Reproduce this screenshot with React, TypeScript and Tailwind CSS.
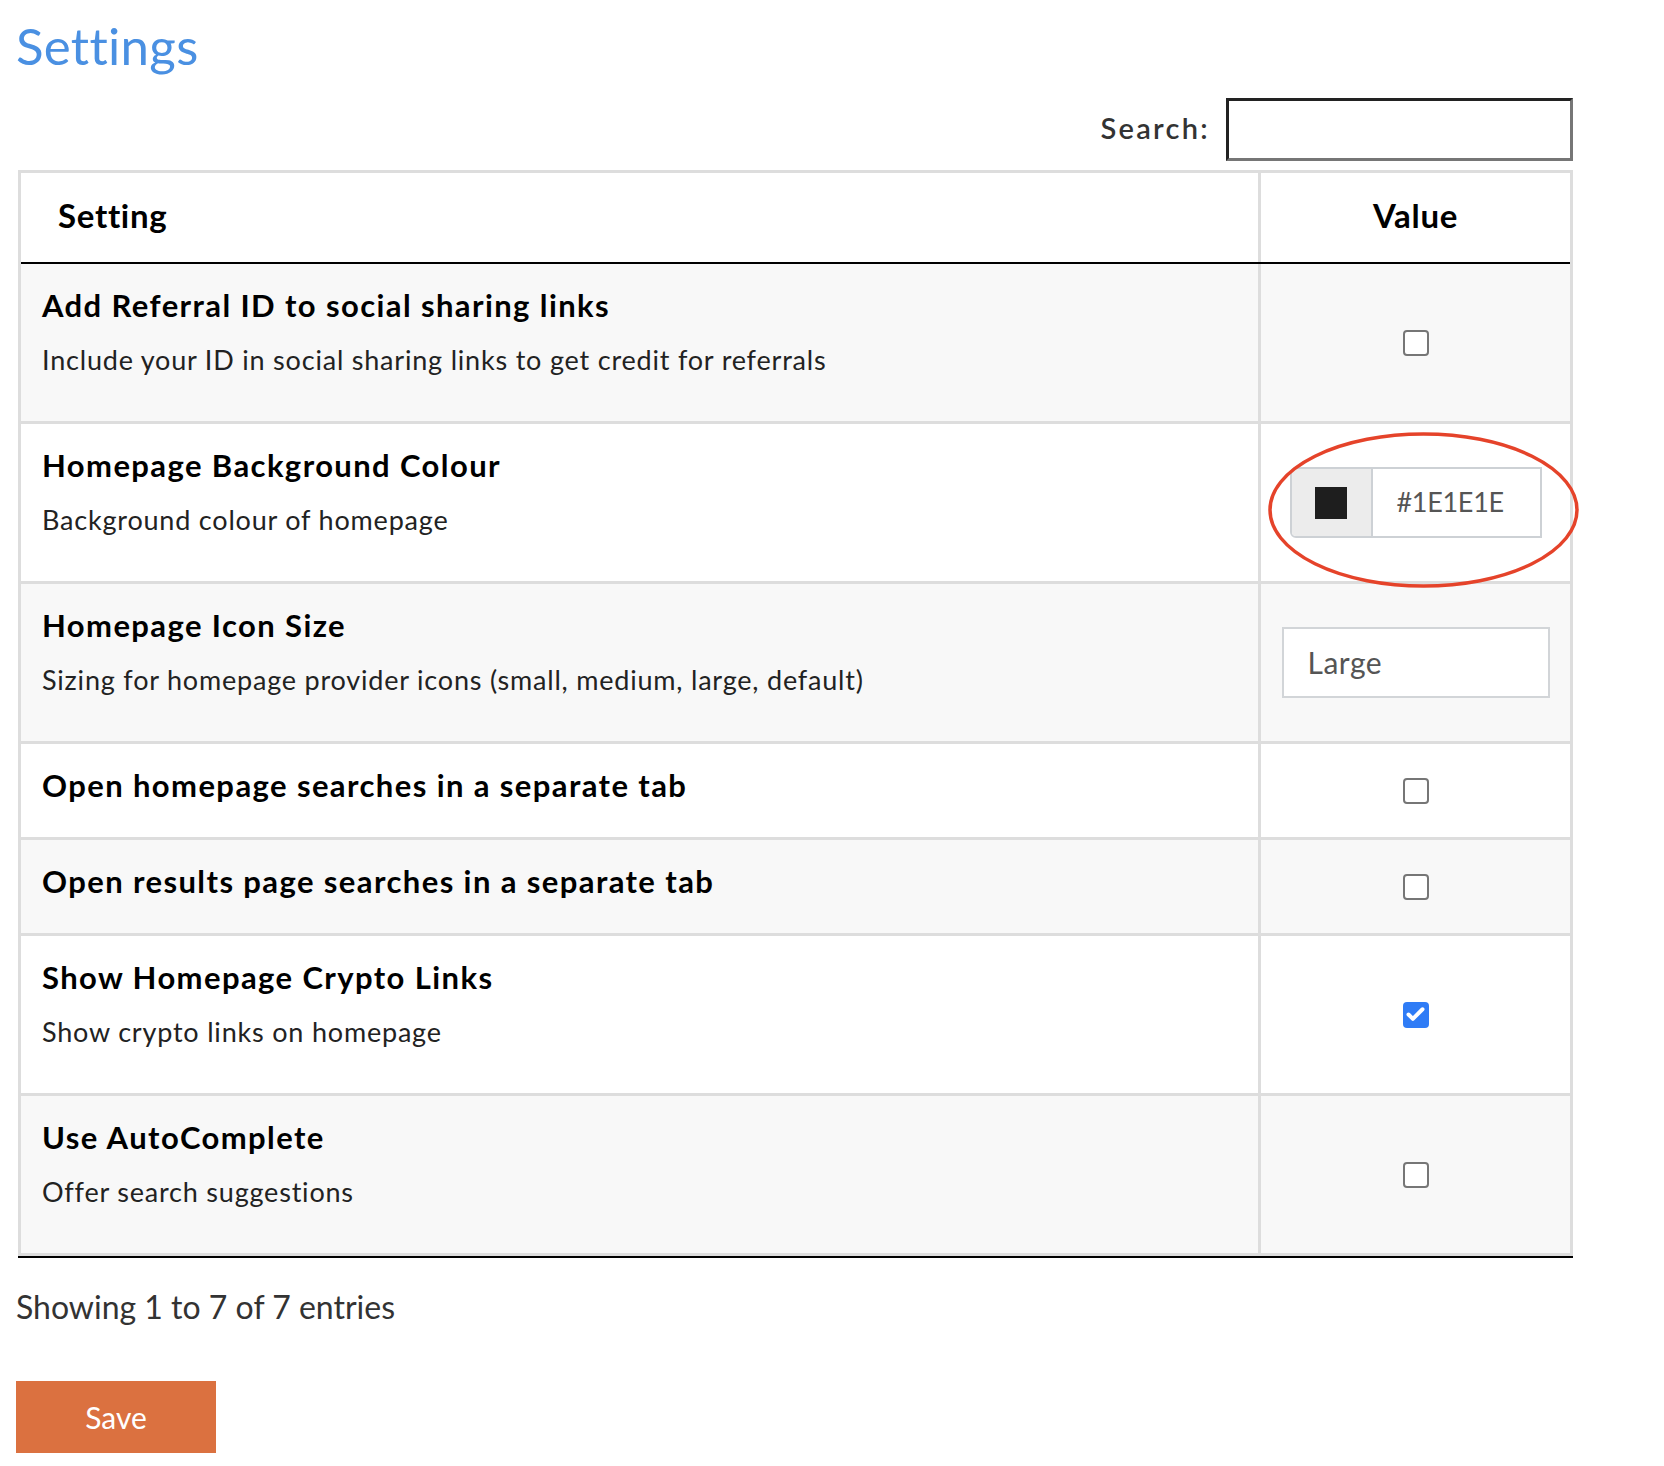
import { Check } from "lucide-react";

type Row = {
  title: string;
  desc?: string;
  kind: "check" | "colour" | "text";
  checked?: boolean;
  value?: string;
};

const rows: Row[] = [
  {
    title: "Add Referral ID to social sharing links",
    desc: "Include your ID in social sharing links to get credit for referrals",
    kind: "check",
  },
  {
    title: "Homepage Background Colour",
    desc: "Background colour of homepage",
    kind: "colour",
    value: "#1E1E1E",
  },
  {
    title: "Homepage Icon Size",
    desc: "Sizing for homepage provider icons (small, medium, large, default)",
    kind: "text",
    value: "Large",
  },
  { title: "Open homepage searches in a separate tab", kind: "check" },
  { title: "Open results page searches in a separate tab", kind: "check" },
  {
    title: "Show Homepage Crypto Links",
    desc: "Show crypto links on homepage",
    kind: "check",
    checked: true,
  },
  {
    title: "Use AutoComplete",
    desc: "Offer search suggestions",
    kind: "check",
  },
];

function Box({ checked }: { checked?: boolean }) {
  if (checked) {
    return (
      <span className="w-[26px] h-[26px] rounded-[4px] bg-[#2f7cf6] flex items-center justify-center">
        <Check className="w-[21px] h-[21px] text-white" strokeWidth={4.5} />
      </span>
    );
  }
  return <span className="w-[26px] h-[26px] rounded-[4px] border-2 border-[#767676] bg-white" />;
}

function Value({ row }: { row: Row }) {
  if (row.kind === "colour") {
    return (
      <div className="relative">
        <div className="flex w-[252px] h-[71px] border-2 border-[#cdd1d5] rounded-l-[6px] bg-white">
          <div className="w-[81px] bg-[#ececec] border-r-2 border-[#cdd1d5] rounded-l-[4px] flex items-center justify-center">
            <span className="w-[32px] h-[32px] bg-[#1e1e1e]" />
          </div>
          <div className="flex items-center pl-[24px] text-[27px] tracking-[-0.3px] text-[#555]">{row.value}</div>
        </div>
        <svg
          className="absolute left-[-22px] top-[-35px] pointer-events-none"
          width="312"
          height="158"
          viewBox="0 0 312 158"
        >
          <ellipse cx="155.5" cy="78" rx="153.5" ry="76" fill="none" stroke="#e5432a" strokeWidth="3.5" />
        </svg>
      </div>
    );
  }
  if (row.kind === "text") {
    return (
      <div className="w-[268px] h-[71px] border-2 border-[#d2d5d8] bg-white flex items-center pl-[24px] text-[30px] tracking-[0.5px] text-[#555]">
        {row.value}
      </div>
    );
  }
  return <Box checked={row.checked} />;
}

export default function App() {
  return (
    <div className="min-h-screen bg-white pl-4 pt-[16px] pb-[12px] font-['Lato',sans-serif] text-[#222]">
      <h1 className="text-[51px] leading-[60px] tracking-[0.3px] text-[#4a90e2] font-normal">Settings</h1>

      <div className="w-[1555px] ml-[2px]">
        <div className="flex justify-end items-center mt-[22px] h-[63px]">
          <span className="text-[29px] font-semibold tracking-[2.3px] text-[#333] mr-[16px] pb-[4px]">Search:</span>
          <input className="w-[347px] h-[63px] border-[3px] border-t-[#222] border-l-[#222] border-b-[#767676] border-r-[#767676] bg-white outline-none" />
        </div>

        <div className="mt-[9px] border-x-[3px] border-t-[3px] border-[#dddddd]">
          <div className="flex h-[91px] border-b-2 border-black bg-white text-black font-bold text-[33px] tracking-[0.7px]">
            <div className="flex-1 flex items-center pl-[37px] pb-[3px] border-r-[3px] border-[#dddddd]">Setting</div>
            <div className="w-[309px] flex items-center justify-center pb-[3px]">Value</div>
          </div>
          {rows.map((r, i) => (
            <div
              key={r.title}
              className={`flex border-b-[3px] border-[#dddddd] ${i % 2 === 0 ? "bg-[#f8f8f8]" : "bg-white"} ${r.desc ? "h-[160px]" : "h-[96px]"}`}
            >
              <div className={`flex-1 pl-[21px] border-r-[3px] border-[#dddddd] ${r.desc ? "pt-[22px]" : "pt-[22px]"}`}>
                <div className="text-[31px] leading-[38px] tracking-[1.4px] font-bold text-black">{r.title}</div>
                {r.desc && (
                  <div className="mt-[18px] text-[27px] leading-[36px] tracking-[0.8px] text-[#222]">{r.desc}</div>
                )}
              </div>
              <div className="w-[309px] flex items-center justify-center">
                <Value row={r} />
              </div>
            </div>
          ))}
        </div>
        <div className="h-[2px] bg-black" />
      </div>

      <div className="mt-[25px] text-[32px] text-[#333]">Showing 1 to 7 of 7 entries</div>

      <button className="mt-[50px] w-[200px] h-[72px] bg-[#db7140] text-white text-[30px]">Save</button>
    </div>
  );
}
